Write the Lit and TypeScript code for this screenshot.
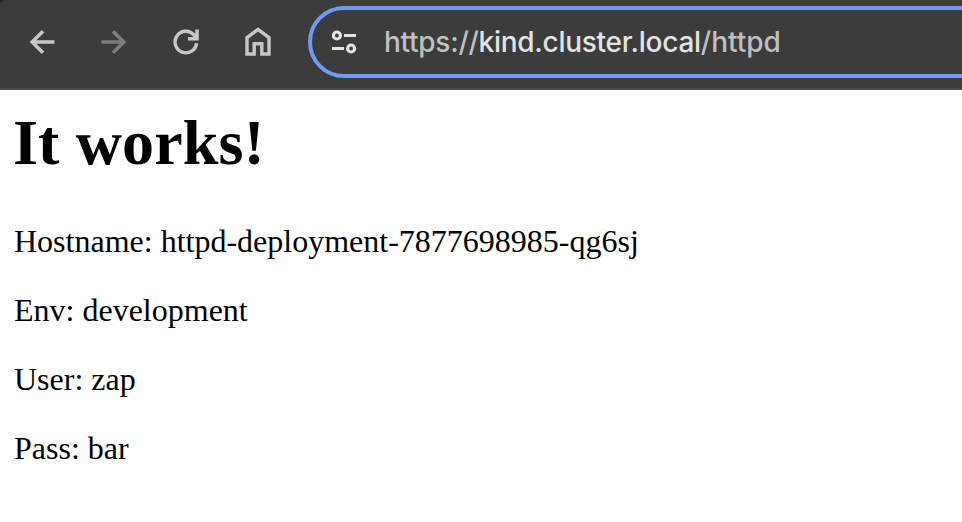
import { LitElement, html, css } from "lit";
import { customElement } from "lit/decorators.js";

@customElement("browser-toolbar")
class BrowserToolbar extends LitElement {
  static styles = css`
    :host {
      display: flex;
      align-items: flex-start;
      box-sizing: border-box;
      height: 90px;
      padding: 6px 0 0 24px;
      background: linear-gradient(135deg, #1e1e1e 2px, #3c3c3c 3px);
      border-bottom: 2px solid #4a4849;
      overflow: hidden;
    }
    .nav {
      display: flex;
      align-items: center;
      gap: 36px;
      height: 72px;
      color: #c7c7c7;
    }
    svg {
      display: block;
      flex: none;
    }
    .disabled {
      color: #7d7d7d;
    }
    .omnibox {
      display: flex;
      align-items: center;
      box-sizing: border-box;
      flex: none;
      width: 720px;
      height: 72px;
      margin-left: 32px;
      padding-left: 18px;
      border: 4px solid #6f9bf0;
      border-radius: 36px;
      color: #e3e3e3;
    }
    .url {
      margin-left: 26px;
      font: 500 28px/40px Inter, "Liberation Sans", sans-serif;
      white-space: nowrap;
      color: #c0c0c0;
      letter-spacing: -0.27px;
    }
    .host {
      color: #e3e3e3;
    }
    .path {
      letter-spacing: 0;
    }
  `;

  render() {
    return html`
      <div class="nav">
        <svg width="36" height="36" viewBox="0 0 36 36" fill="none" stroke="currentColor" stroke-width="3.5">
          <path d="M30.5 18H8M19 7.2L8.2 18L19 28.8" />
        </svg>
        <svg class="disabled" width="36" height="36" viewBox="0 0 36 36" fill="none" stroke="currentColor" stroke-width="3.5">
          <path d="M5.5 18H28M17 7.2L27.8 18L17 28.8" />
        </svg>
        <svg width="36" height="36" viewBox="0 0 36 36" fill="none" stroke="currentColor" stroke-width="3.4">
          <path d="M28.6 19.2A10.8 10.8 0 1 1 25.6 10.5L27.6 12.6" />
          <path d="M30.8 5.6V16.4H20V12.9H24.6L27.3 10.2V5.6Z" fill="currentColor" stroke="none" />
        </svg>
        <svg width="36" height="36" viewBox="0 0 36 36" fill="none" stroke="currentColor" stroke-width="3.4">
          <path d="M7 30V13.6L18 5.4L29 13.6V30H21.8V19.8H14.2V30Z" />
        </svg>
      </div>
      <div class="omnibox">
        <svg width="28" height="28" viewBox="0 0 28 28" fill="none" stroke="currentColor" stroke-width="3.2">
          <circle cx="6.9" cy="7.5" r="3.5" />
          <path d="M14 7.5H26M2 20.5H14" />
          <circle cx="21.1" cy="20.5" r="3.5" />
        </svg>
        <div class="url">https://<span class="host">kind.cluster.local</span><span class="path">/httpd</span></div>
      </div>
    `;
  }
}

@customElement("app-root")
class AppRoot extends LitElement {
  static styles = css`
    :host {
      display: block;
      height: 522px;
      overflow: hidden;
      background: #fff;
    }
    main {
      padding: 16px 14px 0;
      font-family: "Liberation Serif", "Times New Roman", serif;
      color: #000;
    }
    h1 {
      margin: 0 0 43px -1px;
      font-size: 64px;
      line-height: 74px;
      letter-spacing: 0.15px;
    }
    p {
      margin: 0 0 32px;
      font-size: 32px;
      line-height: 37px;
    }
  `;

  render() {
    return html`
      <browser-toolbar></browser-toolbar>
      <main>
        <h1>It works!</h1>
        <p>Hostname: httpd-deployment-7877698985-qg6sj</p>
        <p>Env: development</p>
        <p>User: zap</p>
        <p>Pass: bar</p>
      </main>
    `;
  }
}
